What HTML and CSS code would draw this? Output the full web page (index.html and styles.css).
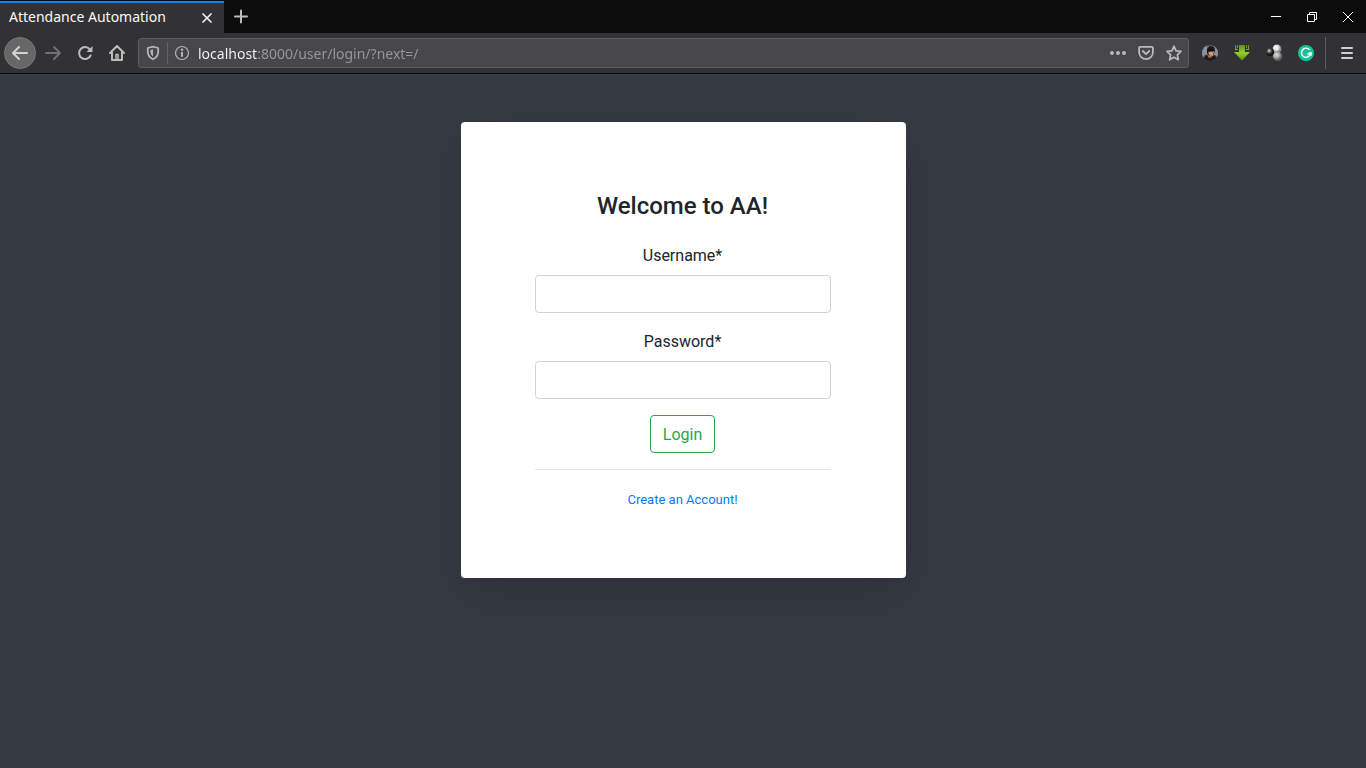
FILE: index.html
```
<!DOCTYPE html>
<html lang="en">
<head>
<meta charset="utf-8">
<meta name="viewport" content="width=device-width, initial-scale=1">
<title>Attendance Automation</title>
<link rel="stylesheet" href="styles.css">
</head>
<body>
<div class="browser">
  <header class="chrome">
    <div class="tab-strip">
      <div class="tab">
        <span class="tab-title">Attendance Automation</span>
        <button class="tab-close" type="button" aria-label="Close tab">
          <svg width="16" height="16" viewBox="0 0 16 16" fill="none" stroke="#f2f2f3" stroke-width="1.7" stroke-linecap="round"><path d="M4 4l8 8M12 4l-8 8"/></svg>
        </button>
      </div>
      <button class="new-tab" type="button" aria-label="New tab">
        <svg width="16" height="16" viewBox="0 0 16 16" fill="none" stroke="#bcbcbd" stroke-width="2" stroke-linecap="round"><path d="M8 1.500v12M2 7.500h12"/></svg>
      </button>
      <div class="window-buttons">
        <button class="window-button" type="button" aria-label="Minimize"><svg width="12" height="12" viewBox="0 0 12 12" fill="none" stroke="#fff"><path d="M1 5.500h10"/></svg></button>
        <button class="window-button" type="button" aria-label="Restore"><svg width="12" height="12" viewBox="0 0 12 12" fill="none" stroke="#fff"><path d="M1.500 3.500h7v7h-7zM3.500 3.500v-2h7v7h-2"/></svg></button>
        <button class="window-button" type="button" aria-label="Close"><svg width="12" height="12" viewBox="0 0 12 12" fill="none" stroke="#fff"><path d="M1 1l10 10M11 1l-10 10"/></svg></button>
      </div>
    </div>

    <div class="toolbar">
      <div class="nav">
        <button class="tool back" type="button" aria-label="Back"><svg width="20" height="20" viewBox="0 0 20 20" fill="none" stroke="#d2d2d3" stroke-width="2" stroke-linecap="round" stroke-linejoin="round"><path d="M17 10H3M9 4l-6 6 6 6"/></svg></button>
        <button class="tool" type="button" aria-label="Forward" disabled><svg width="20" height="20" viewBox="0 0 20 20" fill="none" stroke="#727274" stroke-width="2" stroke-linecap="round" stroke-linejoin="round"><path d="M4 10h14M12 4l6 6-6 6"/></svg></button>
        <button class="tool" type="button" aria-label="Reload"><svg width="20" height="20" viewBox="0 0 20 20" fill="none" stroke="#bcbcbd" stroke-width="2" stroke-linecap="round"><path d="M16.600 12.500a6 6 0 1 1-.8-6.200"/><path d="M18.500 3v6h-6z" fill="#bcbcbd" stroke="none"/></svg></button>
        <button class="tool" type="button" aria-label="Home"><svg width="20" height="20" viewBox="0 0 20 20" fill="none" stroke="#bcbcbd" stroke-width="2" stroke-linecap="round" stroke-linejoin="round"><path d="M4 10l7-7 7 7M6 9v8h10V9"/><path d="M10 16v-4.500h2V16" stroke-width="1.500"/></svg></button>
      </div>

      <div class="url-bar">
        <button class="url-icon shield" type="button" aria-label="Tracking protection"><svg width="16" height="16" viewBox="0 0 16 16" fill="none" stroke="#b5b5b7" stroke-width="1.800" stroke-linejoin="round"><path d="M8 1.700L13.200 3v3.600c0 3.500-1.700 6.100-5.200 7.700-3.500-1.600-5.200-4.200-5.200-7.700V3z"/><path d="M8 4.300v7.200C6.300 10.300 5.500 8.500 5.500 6.500V4.900z" fill="#b5b5b7" stroke="none"/></svg></button>
        <button class="url-icon" type="button" aria-label="Site information"><svg width="16" height="16" viewBox="0 0 16 16" fill="none" stroke="#b5b5b7"><circle cx="8" cy="8" r="6.500" stroke-width="1.200"/><path d="M8 7v4.800" stroke-width="2"/><circle cx="8" cy="4.700" r="1.200" fill="#b5b5b7" stroke="none"/></svg></button>
        <input class="url" type="text" aria-label="Address" value="localhost:8000/user/login/?next=/" spellcheck="false">
        <button class="url-icon action" type="button" aria-label="Page actions"><svg width="18" height="16" viewBox="0 0 18 16" fill="#b9b9bb"><circle cx="3" cy="8" r="2"/><circle cx="9" cy="8" r="2"/><circle cx="15" cy="8" r="2"/></svg></button>
        <button class="url-icon action" type="button" aria-label="Save to Pocket"><svg width="18" height="16" viewBox="0 0 18 16" fill="none" stroke="#b9b9bb" stroke-width="1.800" stroke-linecap="round" stroke-linejoin="round"><path d="M3 1.900h12c.5 0 .9.400.9.900v4.500a6.900 6.900 0 0 1-13.800 0V2.800c0-.5.4-.9.900-.9z"/><path d="M5.800 6L9 9.100 12.200 6"/></svg></button>
        <button class="url-icon action" type="button" aria-label="Bookmark this page"><svg width="18" height="16" viewBox="0 0 18 16" fill="none" stroke="#b9b9bb" stroke-width="1.800" stroke-linejoin="round"><path d="M9 1.300l2.100 4.500 4.900.600-3.600 3.400.9 4.900L9 12.300l-4.300 2.400.9-4.900L2 6.400l4.900-.6z"/></svg></button>
      </div>

      <div class="extensions">
        <button class="tool" type="button" aria-label="Profile extension"><svg width="16" height="16" viewBox="0 0 16 16"><defs><clipPath id="face"><circle cx="8" cy="8" r="8"/></clipPath></defs><g clip-path="url(#face)"><path fill="#59636c" d="M0 0h16v16H0z"/><path fill="#8493a0" d="M0 3l5-3v9l-5 4zM12 1l4 4v7l-4-2z"/><path fill="#15171a" d="M5 4l3-3 4 1 1 3-1 4-5 1-2-2z"/><path fill="#d29a78" d="M6.500 5.500l5-1 .5 2-1 4-2.500.500-2-2.500z"/><path fill="#111" d="M5.500 4.500l6.500-.5v2l-2 1-1-1-1 1-2-.5z"/><path fill="#1b1b1e" d="M1 16l2-6 4 1 2 1 4-2 3 6z"/><path fill="#b8603f" d="M6 10.500l4 .5-1 2-3-.5z"/></g></svg></button>
        <button class="tool" type="button" aria-label="Download extension"><svg width="16" height="16" viewBox="0 0 16 16"><defs><linearGradient id="green" x2="0" y2="1"><stop stop-color="#5f8f1a"/><stop offset=".5" stop-color="#93cf25"/><stop offset="1" stop-color="#5c9310"/></linearGradient></defs><path fill="url(#green)" d="M5 0h6v7h5l-8 8.500L0 7h5zM1 0h1v4h2v1H1zM3 0h1v3H3zM12 0h1v3h-1zM14 0h1v5h-3V4h2z"/></svg></button>
        <button class="tool" type="button" aria-label="Spheres extension"><svg width="18" height="18" viewBox="0 0 18 18"><defs><radialGradient id="dark" cx=".4" cy=".35"><stop stop-color="#eee"/><stop offset=".4" stop-color="#666"/><stop offset="1" stop-color="#111"/></radialGradient><radialGradient id="light" cx=".4" cy=".35"><stop stop-color="#fff"/><stop offset=".6" stop-color="#ddd"/><stop offset="1" stop-color="#888"/></radialGradient><radialGradient id="mid" cx=".4" cy=".35"><stop stop-color="#ddd"/><stop offset=".6" stop-color="#aaa"/><stop offset="1" stop-color="#666"/></radialGradient></defs><circle cx="12" cy="5" r="4.500" fill="url(#light)"/><circle cx="5" cy="8" r="4" fill="url(#dark)"/><circle cx="12.500" cy="12.300" r="4.700" fill="url(#mid)"/></svg></button>
        <button class="tool" type="button" aria-label="Grammar extension"><svg width="16" height="16" viewBox="0 0 16 16" fill="none"><circle cx="8" cy="8" r="8" fill="#15c39a"/><path d="M11.500 4.700a4.600 4.600 0 1 0 1 4.300H9.300" stroke="#fff" stroke-width="1.400"/><path d="M10.800 7.800h2.400v3" stroke="#fff" stroke-width="1.200"/></svg></button>
      </div>
      <button class="tool menu" type="button" aria-label="Open menu"><svg width="16" height="16" viewBox="0 0 16 16" fill="none" stroke="#d0d0d1" stroke-width="2" stroke-linecap="round"><path d="M3 3h10M3 8h10M3 13h10"/></svg></button>
    </div>
  </header>

  <main class="page">
    <section class="card">
      <h1 class="title">Welcome to AA!</h1>
      <form class="form">
        <div class="field">
          <label for="username">Username*</label>
          <input class="control" id="username" name="username" type="text" required>
        </div>
        <div class="field">
          <label for="password">Password*</label>
          <input class="control" id="password" name="password" type="password" required>
        </div>
        <button class="login" type="submit">Login</button>
      </form>
      <hr class="divider">
      <a class="register" href="#">Create an Account!</a>
    </section>
  </main>
</div>
</body>
</html>
```
FILE: styles.css
```
* {
  box-sizing: border-box;
}

body {
  margin: 0;
  background: #363a43;
  color: #212529;
  font: 16px/24px Roboto, sans-serif;
}

button {
  padding: 0;
  border: 0;
  background: none;
  font: inherit;
}

svg {
  display: block;
}

.browser {
  display: flex;
  flex-direction: column;
  min-height: 100vh;
}

.chrome {
  border-bottom: 1px solid #0c0c0d;
  background: #323234;
  font-family: "Noto Sans", sans-serif;
}

/* Tabs and window buttons */
.tab-strip {
  display: flex;
  height: 33px;
  background: #0c0c0d;
}

.tab {
  display: flex;
  align-items: center;
  justify-content: space-between;
  width: 224px;
  margin-top: 1px;
  padding: 0 9px;
  border-top: 2px solid #0a84ff;
  background: #323234;
}

.tab-title {
  padding-bottom: 2px;
  color: #f9f9fa;
  font-size: 14px;
}

.new-tab,
.window-button {
  display: grid;
  place-items: center;
  width: 34px;
}

.window-buttons {
  display: flex;
  margin-left: auto;
}

.window-button {
  width: 36px;
}

/* Navigation toolbar */
.toolbar {
  display: flex;
  align-items: center;
  height: 40px;
  padding: 0 4px;
}

.nav,
.extensions {
  display: flex;
}

.tool {
  display: grid;
  place-items: center;
  width: 32px;
  height: 32px;
}

.back {
  border: 1px solid #777779;
  border-radius: 50%;
  background: #676768;
}

.url-bar {
  display: flex;
  flex: 1;
  align-items: center;
  min-width: 0;
  height: 30px;
  margin: 0 5px 0 6px;
  border: 1px solid #5d5d60;
  border-radius: 3px;
  background: #474749;
}

.url-icon {
  display: grid;
  flex: none;
  place-items: center;
  width: 28px;
  height: 22px;
}

.shield {
  width: 29px;
  border-right: 1px solid #646467;
}

.url {
  flex: 1;
  min-width: 0;
  height: 28px;
  padding: 0 0 0 2px;
  border: 0;
  outline: 0;
  background: linear-gradient(to right, #f9f9fa 61px, #99999b 61px);
  background-clip: text;
  -webkit-background-clip: text;
  color: transparent;
  font: 14px/20px "Noto Sans", sans-serif;
}

.menu {
  width: 37px;
  margin-left: 3px;
  padding-left: 5px;
  border-left: 1px solid #5d5d60;
}

/* Login card */
.page {
  display: flex;
  flex: 1;
  align-items: flex-start;
  justify-content: center;
  padding: 48px 16px;
}

.card {
  display: flex;
  flex-direction: column;
  width: 100%;
  max-width: 445px;
  padding: 68px 75px 64px 74px;
  border-radius: 4px;
  background: #fff;
  box-shadow: 0 16px 48px rgba(0, 0, 0, 0.175);
  text-align: center;
}

.title {
  margin: 0 0 20px;
  font-size: 24px;
  font-weight: 500;
  line-height: 33px;
}

.form {
  display: flex;
  flex-direction: column;
  gap: 16px;
}

.field {
  display: grid;
  gap: 6px;
  line-height: 26px;
}

.control {
  width: 100%;
  height: 38px;
  padding: 6px 12px;
  border: 1px solid #ced4da;
  border-radius: 4px;
  background: #fff;
  font: inherit;
}

.login {
  align-self: center;
  padding: 7px 12px 5px;
  border: 1px solid #28a745;
  border-radius: 4px;
  color: #28a745;
}

.divider {
  width: 100%;
  margin: 16px 0;
  border: 0;
  border-top: 1px solid #e5e5e5;
}

.register {
  align-self: center;
  color: #007bff;
  font-size: 13px;
  line-height: 28px;
  text-decoration: none;
}
```
